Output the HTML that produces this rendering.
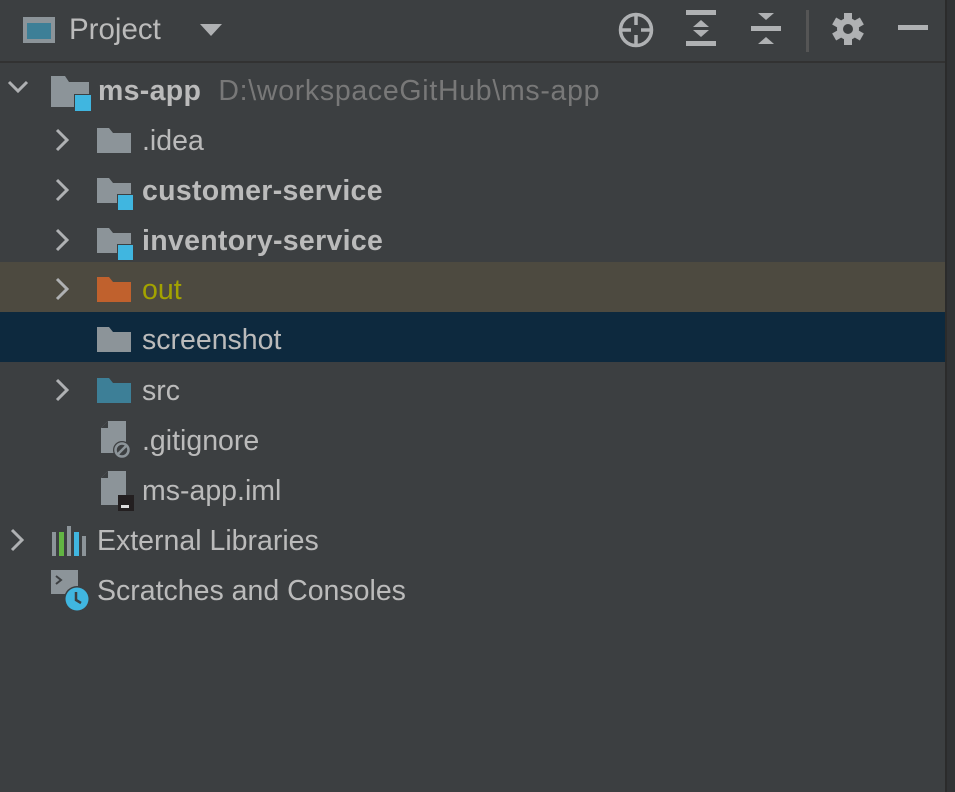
<!DOCTYPE html>
<html><head><style>
body{margin:0;width:955px;height:792px;background:#3c3f41;font-family:"Liberation Sans",sans-serif;overflow:hidden;position:relative;color:#bbbbbb}
.hdr{position:absolute;left:0;top:0;width:945px;height:61px;border-bottom:2px solid #323232}
.strip{position:absolute;left:945px;top:0;width:10px;height:792px;background:#313335;border-left:2px solid #2b2b2b}
.row{position:absolute;left:0;width:945px;height:50px;font-size:28.5px;line-height:50px}
.row span.t{position:absolute;top:1px}
.arr{position:absolute;top:0}
b{font-weight:bold;letter-spacing:0.3px}
</style></head><body>
<div class="hdr">
<svg style="position:absolute;left:22px;top:16px" width="34" height="28"><rect x="1" y="1" width="32" height="26" fill="#8c9499"/><rect x="5" y="7" width="24" height="16" fill="#3d7f97"/></svg>
<div style="position:absolute;left:69px;top:13px;font-size:29.5px;color:#bbb">Project</div>
<svg style="position:absolute;left:200px;top:24px" width="22" height="14"><path d="M0 0H22L11 12Z" fill="#afb1b3"/></svg>
<svg style="position:absolute;left:618px;top:12px" width="36" height="36" fill="none" stroke="#afb1b3" stroke-width="3.5"><circle cx="18" cy="18" r="15.5"/><path d="M18 3V13M18 23V33M3 18H13M23 18H33"/></svg>
<svg style="position:absolute;left:685px;top:9px" width="32" height="38" fill="#afb1b3"><rect x="1" y="1" width="30" height="5"/><rect x="1" y="32" width="30" height="5"/><path d="M8 18L16 11L24 18ZM8 21L16 28L24 21Z"/></svg>
<svg style="position:absolute;left:750px;top:12px" width="32" height="33" fill="#afb1b3"><path d="M8 1H24L16 8ZM8 32H24L16 25Z"/><rect x="1" y="14" width="30" height="5"/></svg>
<div style="position:absolute;left:806px;top:10px;width:3px;height:42px;background:#555"></div>
<svg style="position:absolute;left:830px;top:11px" width="36" height="36"><g fill="#afb1b3" transform="translate(18 18)"><circle r="11"/><g id="k"><rect x="-4" y="-16" width="8" height="32"/></g><use href="#k" transform="rotate(60)"/><use href="#k" transform="rotate(120)"/></g><circle cx="18" cy="18" r="5" fill="#3c3f41"/></svg>
<div style="position:absolute;left:898px;top:25px;width:30px;height:5px;background:#afb1b3"></div>
</div>
<div class="strip"></div>

<div class="row" style="top:65px">
<svg class="arr" style="left:7px;top:15px" width="22" height="14" fill="none" stroke="#afb1b3" stroke-width="3"><path d="M2 2L11 11L20 2"/></svg>
<svg style="position:absolute;left:50px;top:8px" width="42" height="38"><path d="M1 3H15L19 9H39V34H1Z" fill="#8c9499"/><rect x="24" y="21" width="17" height="17" fill="#3c3f41"/><rect x="25" y="22" width="16" height="16" fill="#40b6e0"/></svg>
<span class="t" style="left:98px"><b style="color:#bbb">ms-app</b><span style="color:#787878;letter-spacing:0.7px">&nbsp;&nbsp;D:\workspaceGitHub\ms-app</span></span></div>

<div class="row" style="top:115px">
<svg class="arr" style="left:55px;top:13px" width="14" height="24" fill="none" stroke="#afb1b3" stroke-width="3"><path d="M2 2L12 12L2 22"/></svg>
<svg style="position:absolute;left:96px;top:10px" width="36" height="30"><path d="M1 3H13L17 8H35V28H1Z" fill="#8c9499"/></svg>
<span class="t" style="left:142px">.idea</span></div>

<div class="row" style="top:165px">
<svg class="arr" style="left:55px;top:13px" width="14" height="24" fill="none" stroke="#afb1b3" stroke-width="3"><path d="M2 2L12 12L2 22"/></svg>
<svg style="position:absolute;left:96px;top:10px" width="40" height="36"><path d="M1 3H13L17 8H35V28H1Z" fill="#8c9499"/><rect x="21" y="19" width="16" height="16" fill="#3c3f41"/><rect x="22" y="20" width="15" height="15" fill="#40b6e0"/></svg>
<span class="t" style="left:142px"><b>customer-service</b></span></div>

<div class="row" style="top:215px">
<svg class="arr" style="left:55px;top:13px" width="14" height="24" fill="none" stroke="#afb1b3" stroke-width="3"><path d="M2 2L12 12L2 22"/></svg>
<svg style="position:absolute;left:96px;top:10px" width="40" height="36"><path d="M1 3H13L17 8H35V28H1Z" fill="#8c9499"/><rect x="21" y="19" width="16" height="16" fill="#3c3f41"/><rect x="22" y="20" width="15" height="15" fill="#40b6e0"/></svg>
<span class="t" style="left:142px"><b>inventory-service</b></span></div>

<div class="row" style="top:262px;background:#4d4a40">
<svg class="arr" style="left:55px;top:15px" width="14" height="24" fill="none" stroke="#afb1b3" stroke-width="3"><path d="M2 2L12 12L2 22"/></svg>
<svg style="position:absolute;left:96px;top:12px" width="36" height="30"><path d="M1 3H13L17 8H35V28H1Z" fill="#c0612d"/></svg>
<span class="t" style="left:142px;top:3px;color:#a3a300">out</span></div>

<div class="row" style="top:312px;background:#0d293e">
<svg style="position:absolute;left:96px;top:12px" width="36" height="30"><path d="M1 3H13L17 8H35V28H1Z" fill="#8c9499"/></svg>
<span class="t" style="left:142px;top:3px;color:#bbb">screenshot</span></div>

<div class="row" style="top:365px">
<svg class="arr" style="left:55px;top:13px" width="14" height="24" fill="none" stroke="#afb1b3" stroke-width="3"><path d="M2 2L12 12L2 22"/></svg>
<svg style="position:absolute;left:96px;top:10px" width="36" height="30"><path d="M1 3H13L17 8H35V28H1Z" fill="#3d7f97"/></svg>
<span class="t" style="left:142px">src</span></div>

<div class="row" style="top:415px">
<svg style="position:absolute;left:100px;top:5px" width="34" height="40"><path d="M8 1H26V33H1V8Z" fill="#8c9499"/><path d="M1 8H8V1Z" fill="#3c3f41"/><circle cx="22" cy="30" r="9" fill="#3c3f41"/><circle cx="22" cy="30" r="6.5" fill="none" stroke="#8c9499" stroke-width="2.5"/><path d="M17 35L27 25" stroke="#8c9499" stroke-width="2.5"/></svg>
<span class="t" style="left:142px">.gitignore</span></div>

<div class="row" style="top:465px">
<svg style="position:absolute;left:100px;top:5px" width="34" height="42"><path d="M8 1H26V35H1V8Z" fill="#8c9499"/><path d="M1 8H8V1Z" fill="#3c3f41"/><rect x="18" y="25" width="16" height="16" fill="#231f20"/><rect x="21" y="35" width="8" height="3" fill="#ddd"/></svg>
<span class="t" style="left:142px">ms-app.iml</span></div>

<div class="row" style="top:515px">
<svg class="arr" style="left:10px;top:13px" width="14" height="24" fill="none" stroke="#afb1b3" stroke-width="3"><path d="M2 2L12 12L2 22"/></svg>
<svg style="position:absolute;left:50px;top:10px" width="38" height="32"><rect x="2" y="7" width="4" height="24" fill="#8c9499"/><rect x="9" y="7" width="5" height="24" fill="#62b543"/><rect x="17" y="1" width="4" height="30" fill="#8c9499"/><rect x="24" y="7" width="5" height="24" fill="#40b6e0"/><rect x="32" y="11" width="4" height="20" fill="#8c9499"/></svg>
<span class="t" style="left:97px">External Libraries</span></div>

<div class="row" style="top:565px">
<svg style="position:absolute;left:50px;top:4px" width="42" height="42"><rect x="1" y="1" width="27" height="24" fill="#8c9499"/><path d="M6 7L11 11L6 15" stroke="#3c3f41" stroke-width="2" fill="none"/><circle cx="27" cy="30" r="13" fill="#3c3f41"/><circle cx="27" cy="30" r="11.5" fill="#40b6e0"/><path d="M26 23V31L31 34" stroke="#3c3f41" stroke-width="2.5" fill="none"/></svg>
<span class="t" style="left:97px">Scratches and Consoles</span></div>
</body></html>
